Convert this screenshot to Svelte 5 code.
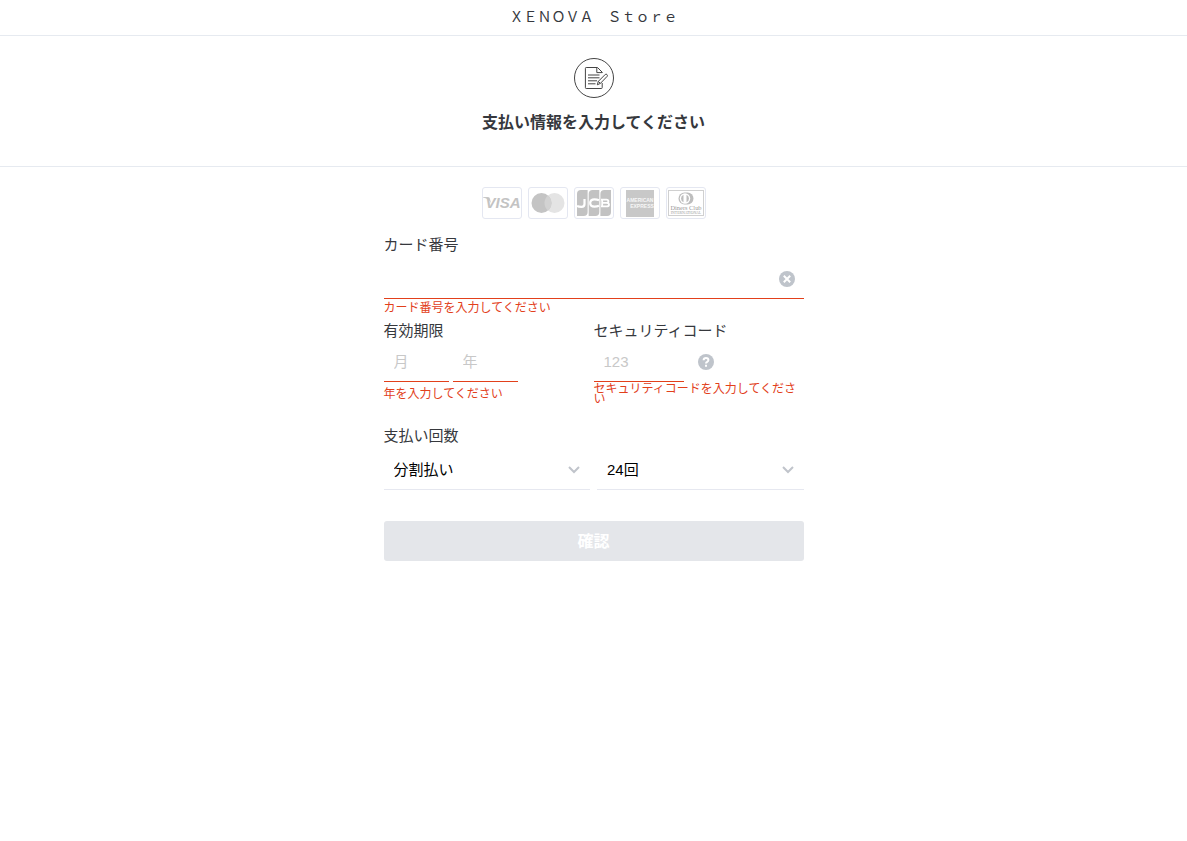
<script lang="ts">
	let cardNumber = $state('');
	let month = $state('');
	let year = $state('');
	let code = $state('');
	let method = $state('分割払い');
	let count = $state('24回');

	const methods = ['一括払い', '分割払い', 'リボ払い'];
	const counts = ['3回', '6回', '12回', '24回'];

	const ready = $derived(
		cardNumber !== '' && month !== '' && year !== '' && code !== ''
	);
</script>

<header class="site-header">ＸＥＮＯＶＡ　Ｓｔｏｒｅ</header>

<section class="intro">
	<svg class="intro-icon" viewBox="0 0 40 40" aria-hidden="true">
		<circle cx="20" cy="20" r="19.5" />
		<path d="M28.2 15V14.2L23.5 9.5H12.2Q11.4 9.5 11.4 10.3V29.7Q11.4 30.5 12.2 30.5H27.4Q28.2 30.5 28.2 29.7V25" />
		<path d="M22.8 9.8V14.6H28" />
		<path d="M14 17H25.5M14 19.8H25.5M14 22.8H23M14 25.8H21.5" />
		<path class="pen" d="M23.3 26.8L24.3 23.4L31.3 16.4Q32.2 15.8 33 16.6Q33.8 17.4 33.2 18.3L26.4 25.4ZM24.3 23.4L26.4 25.4" />
	</svg>
	<h1>支払い情報を入力してください</h1>
</section>

<main class="payment">
	<ul class="brands">
		<li>
			<svg viewBox="0 0 38 30" role="img" aria-label="VISA">
				<path d="M0 9H5Q6.8 9 7 11L8 15Q5.5 10.5 0 9.6Z" fill="#c8c8c8" />
				<text x="20" y="20" font-size="15" font-weight="700" font-style="italic" fill="#c3c3c3" text-anchor="middle">VISA</text>
			</svg>
		</li>
		<li>
			<svg viewBox="0 0 38 30" role="img" aria-label="Mastercard">
				<circle cx="25.5" cy="15" r="10" fill="#e4e4e4" />
				<circle cx="12.5" cy="15" r="10" fill="#c4c4c4" />
				<path d="M19 7.4A10 10 0 0 1 19 22.6A10 10 0 0 1 19 7.4Z" fill="#d2d2d2" />
			</svg>
		</li>
		<li>
			<svg viewBox="0 0 38 30" role="img" aria-label="JCB">
				<g fill="#c2c2c2">
					<path d="M6 2H12.6V24Q12.6 28 8.6 28H2V6Q2 2 6 2Z" />
					<path d="M17.7 2H24.3V24Q24.3 28 20.3 28H13.7V6Q13.7 2 17.7 2Z" />
					<path d="M29.4 2H36V24Q36 28 32 28H25.4V6Q25.4 2 29.4 2Z" />
				</g>
				<g fill="none" stroke="#fff" stroke-width="2.2">
					<path d="M9.5 11V16Q9.5 18.8 6.5 18.8Q3.5 18.8 2 17.8" />
					<path d="M24 12.2Q22 11.4 19.5 11.4Q15.2 11.4 15.2 15Q15.2 18.6 19.5 18.6Q22 18.6 24 17.8" />
					<path d="M26 11.6H31.5Q33.4 11.6 33.4 13.2Q33.4 14.9 31.5 14.9H27M31.5 14.9Q34 14.9 34 16.7Q34 18.4 31.5 18.4H26M27.2 11.6V18.4" stroke-width="1.8" />
				</g>
			</svg>
		</li>
		<li>
			<svg viewBox="0 0 38 30" role="img" aria-label="American Express">
				<rect x="5" y="2" width="28" height="27" fill="#c8c8c8" />
				<g font-size="5" font-weight="700" fill="#f7f7f7" text-anchor="middle">
					<text x="19" y="14">AMERICAN</text>
					<text x="21" y="20">EXPRESS</text>
				</g>
			</svg>
		</li>
		<li>
			<svg viewBox="0 0 38 30" role="img" aria-label="Diners Club International">
				<rect x="1.5" y="2.5" width="35" height="25" fill="none" stroke="#d0d0d0" />
				<path d="M17.5 4.5H20.5A6 6 0 0 1 20.5 16.5H17.5A6 6 0 0 1 17.5 4.5Z" fill="#bdbdbd" />
				<circle cx="18" cy="10.5" r="5.2" fill="#fff" />
				<path d="M16.5 6.8A4 4 0 0 0 16.5 14.2ZM19.5 6.8A4 4 0 0 1 19.5 14.2Z" fill="#bdbdbd" />
				<g class="serif" fill="#999" text-anchor="middle">
					<text x="19" y="22" font-size="6.4">Diners Club</text>
					<text x="19" y="26" font-size="3.8">INTERNATIONAL</text>
				</g>
			</svg>
		</li>
	</ul>

	<form onsubmit={(e) => e.preventDefault()}>
		<div class="number-field">
			<label for="card-number">カード番号</label>
			<div class="number-box">
				<input id="card-number" class="control invalid" type="text" inputmode="numeric" bind:value={cardNumber} />
				<button class="clear" type="button" aria-label="クリア" onclick={() => (cardNumber = '')}>
					<svg class="round-icon" viewBox="0 0 16 16" aria-hidden="true">
						<circle cx="8" cy="8" r="8" />
						<path d="M4.8 4.8L11.2 11.2M11.2 4.8L4.8 11.2" />
					</svg>
				</button>
			</div>
			<p class="error">カード番号を入力してください</p>
		</div>

		<div class="columns">
			<div>
				<label for="month">有効期限</label>
				<div class="inline">
					<input id="month" class="control invalid date" type="text" placeholder="月" bind:value={month} />
					<input class="control invalid date" type="text" placeholder="年" aria-label="年" bind:value={year} />
				</div>
				<p class="error date-error">年を入力してください</p>
			</div>
			<div>
				<label for="code">セキュリティコード</label>
				<div class="inline">
					<input id="code" class="control invalid code" type="text" placeholder="123" bind:value={code} />
					<button class="help" type="button" aria-label="セキュリティコードとは">
						<svg class="round-icon" viewBox="0 0 16 16" aria-hidden="true">
							<circle cx="8" cy="8" r="8" />
							<path d="M5.6 6.2Q5.7 4.1 8 4.1Q10.4 4.1 10.4 6.1Q10.4 7.2 9.2 7.8Q8 8.4 8 9.6M8 10.8V12.8" />
						</svg>
					</button>
				</div>
				<p class="error code-error">セキュリティコードを入力してください</p>
			</div>
		</div>

		<div class="times-field">
			<label for="method">支払い回数</label>
			<div class="selects">
				<div class="select">
					<select id="method" class="control" bind:value={method}>
						{#each methods as item}
							<option value={item}>{item}</option>
						{/each}
					</select>
					<svg class="chevron" viewBox="0 0 12 8" aria-hidden="true"><path d="M1 1L6 6L11 1" /></svg>
				</div>
				<div class="select">
					<select class="control" aria-label="分割回数" bind:value={count}>
						{#each counts as item}
							<option value={item}>{item}</option>
						{/each}
					</select>
					<svg class="chevron" viewBox="0 0 12 8" aria-hidden="true"><path d="M1 1L6 6L11 1" /></svg>
				</div>
			</div>
		</div>

		<button class="submit" type="submit" disabled={!ready}>確認</button>
	</form>
</main>

<style>
	:global(body) {
		background: #fff;
		color: #36383d;
		font-family: 'Liberation Sans', 'Noto Sans CJK JP', sans-serif;
	}

	.site-header {
		height: 35px;
		border-bottom: 1px solid #e6eaf0;
		font-family: 'Noto Sans CJK JP', sans-serif;
		font-size: 14px;
		line-height: 32px;
		text-align: center;
	}

	.intro {
		display: flex;
		flex-direction: column;
		align-items: center;
		gap: 15px;
		padding: 22px 0 33px;
		border-bottom: 1px solid #e6eaf0;
	}

	.intro-icon {
		width: 40px;
		height: 40px;
		fill: none;
		stroke: #444;
	}

	.pen { fill: #fff; }

	h1 {
		margin: 0;
		font-size: 16px;
		font-weight: 700;
		line-height: 20px;
	}

	.payment {
		max-width: 420px;
		margin: 0 auto;
		padding: 20px 0;
	}

	/* card brands */
	.brands {
		display: flex;
		justify-content: center;
		gap: 6px;
		margin: 0;
		padding: 0;
		list-style: none;
	}

	.brands li {
		display: flex;
		border: 1px solid #e4e7f1;
		border-radius: 3px;
	}

	.brands svg {
		width: 38px;
		height: 30px;
	}

	.serif { font-family: 'Liberation Serif', serif; }

	/* fields */
	label {
		display: block;
		font-size: 15px;
		line-height: 20px;
	}

	.control {
		box-sizing: border-box;
		width: 100%;
		height: 41px;
		margin: 0;
		padding: 0 10px;
		border: 0;
		border-bottom: 1px solid #e6e8f0;
		border-radius: 0;
		outline: none;
		background: transparent;
		color: #000;
		font-family: inherit;
		font-size: 15px;
	}

	.control::placeholder { color: #c8c8c8; }

	.control.invalid { border-bottom-color: #e2401b; }

	.error {
		margin: 0;
		color: #e2401b;
		font-size: 12px;
		line-height: 18px;
	}

	.number-field { margin-top: 16px; }

	.number-box {
		position: relative;
		margin-top: 3px;
	}

	.clear,
	.help {
		display: flex;
		padding: 0;
		border: 0;
		background: none;
		cursor: pointer;
	}

	.clear {
		position: absolute;
		top: 13px;
		right: 9px;
	}

	.round-icon {
		width: 16px;
		height: 16px;
		fill: #bfc4cb;
	}

	.round-icon path {
		fill: none;
		stroke: #fff;
		stroke-width: 2;
	}

	.columns {
		display: grid;
		grid-template-columns: 1fr 1fr;
		margin-top: 4px;
	}

	.inline {
		display: flex;
		align-items: center;
		gap: 4px;
	}

	.date { width: 65px; }
	.code { width: 90px; }
	.help { margin-left: 10px; }
	.date-error { margin-top: 3px; }

	.code-error {
		margin-top: 2px;
		line-height: 10px;
	}

	.times-field { margin-top: 22px; }

	.selects {
		display: grid;
		grid-template-columns: 1fr 1fr;
		gap: 7px;
		margin-top: 3px;
	}

	.select { position: relative; }

	.select .control {
		display: block;
		appearance: none;
	}

	.chevron {
		position: absolute;
		top: 17px;
		right: 10px;
		width: 12px;
		height: 8px;
		fill: none;
		stroke: #c0c4cb;
		stroke-width: 2;
		pointer-events: none;
	}

	.submit {
		display: block;
		width: 100%;
		height: 40px;
		margin-top: 31px;
		padding: 0 0 2px;
		border: 0;
		border-radius: 3px;
		background: #2f3338;
		color: #fff;
		font-family: inherit;
		font-size: 16px;
		font-weight: 700;
	}

	.submit:disabled { background: #e4e6ea; }
</style>
